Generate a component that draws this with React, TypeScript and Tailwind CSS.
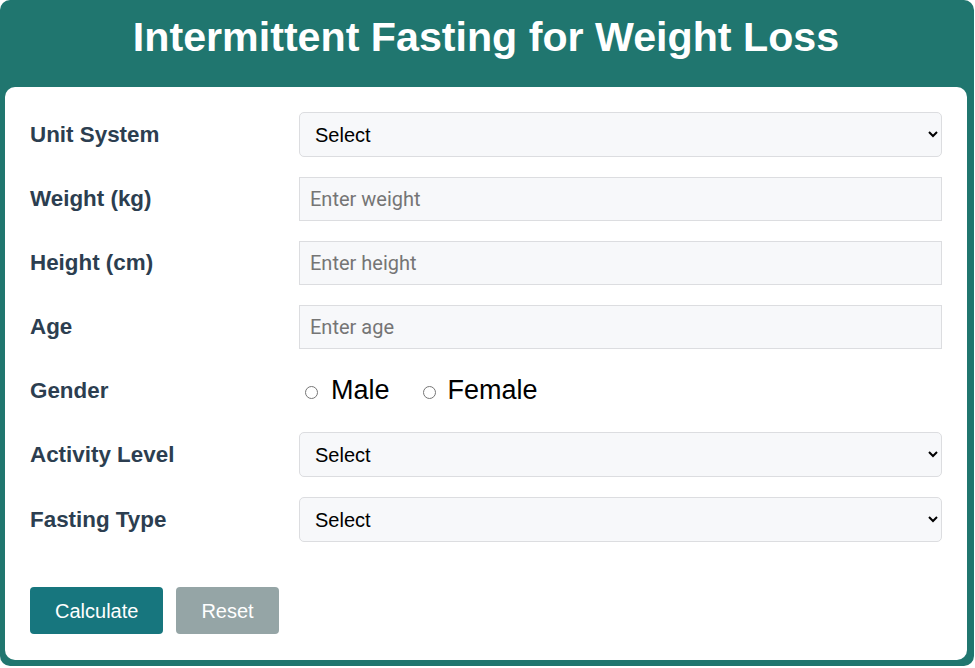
import React, { useState } from 'react';

const labelCls = "text-[22.4px] font-bold text-[#2c3e50]";
const selectCls =
  "w-full h-[45px] pl-[11px] pr-2 text-[20px] text-black bg-[#f7f8fa] border border-[#dcdde0] rounded-[5px] outline-none";
const inputCls =
  "w-full h-[44px] px-[10px] text-[20px] text-black bg-[#f7f8fa] border border-[#dcdde0] outline-none placeholder:text-[#757575] [font-family:Roboto,sans-serif]";

const Row: React.FC<{ label: string; children: React.ReactNode }> = ({ label, children }) => (
  <div className="grid grid-cols-[269px_1fr] items-center">
    <label className={labelCls}>{label}</label>
    <div>{children}</div>
  </div>
);

export default function App() {
  const [gender, setGender] = useState('');

  return (
    <div className="w-[974px] bg-[#20766f] rounded-[10px] pl-[5px] pr-[7px] pb-[6px] [font-family:'Liberation_Sans',Arial,sans-serif]">
      <h1 className="text-white text-[41.2px] font-bold text-center leading-[47px] pt-[14px] pb-[26px]">
        Intermittent Fasting for Weight Loss
      </h1>
      <div className="w-[962px] bg-white rounded-[10px] px-[25px] pt-[25px] pb-[26px]">
        <div className="flex flex-col gap-[20px]">
          <Row label="Unit System">
            <select className={selectCls} defaultValue="">
              <option value="">Select</option>
              <option value="metric">Metric</option>
              <option value="imperial">Imperial</option>
            </select>
          </Row>
          <Row label="Weight (kg)">
            <input className={inputCls} placeholder="Enter weight" />
          </Row>
          <Row label="Height (cm)">
            <input className={inputCls} placeholder="Enter height" />
          </Row>
          <Row label="Age">
            <input className={inputCls} placeholder="Enter age" />
          </Row>
          <Row label="Gender">
            <div className="flex items-center h-[43px] pl-[6px] text-[27px] text-black">
              <label className="flex items-center">
                <input
                  type="radio"
                  name="gender"
                  checked={gender === 'male'}
                  onChange={() => setGender('male')}
                  className="w-[13px] h-[13px] mt-[3px]"
                />
                <span className="ml-[13px]">Male</span>
              </label>
              <label className="flex items-center ml-[33px]">
                <input
                  type="radio"
                  name="gender"
                  checked={gender === 'female'}
                  onChange={() => setGender('female')}
                  className="w-[13px] h-[13px] mt-[3px]"
                />
                <span className="ml-[12px]">Female</span>
              </label>
            </div>
          </Row>
          <Row label="Activity Level">
            <select className={selectCls} defaultValue="">
              <option value="">Select</option>
              <option value="sedentary">Sedentary</option>
              <option value="light">Lightly Active</option>
              <option value="moderate">Moderately Active</option>
              <option value="very">Very Active</option>
            </select>
          </Row>
          <Row label="Fasting Type">
            <select className={selectCls} defaultValue="">
              <option value="">Select</option>
              <option value="16-8">16:8</option>
              <option value="18-6">18:6</option>
              <option value="5-2">5:2</option>
            </select>
          </Row>
        </div>
        <div className="flex gap-[13px] mt-[45px]">
          <button type="button" className="h-[47px] px-[25px] rounded-[4px] bg-[#17767e] text-white text-[20px]">
            Calculate
          </button>
          <button type="button" className="h-[47px] px-[25px] rounded-[4px] bg-[#95a5a6] text-white text-[20px]">
            Reset
          </button>
        </div>
      </div>
    </div>
  );
}
